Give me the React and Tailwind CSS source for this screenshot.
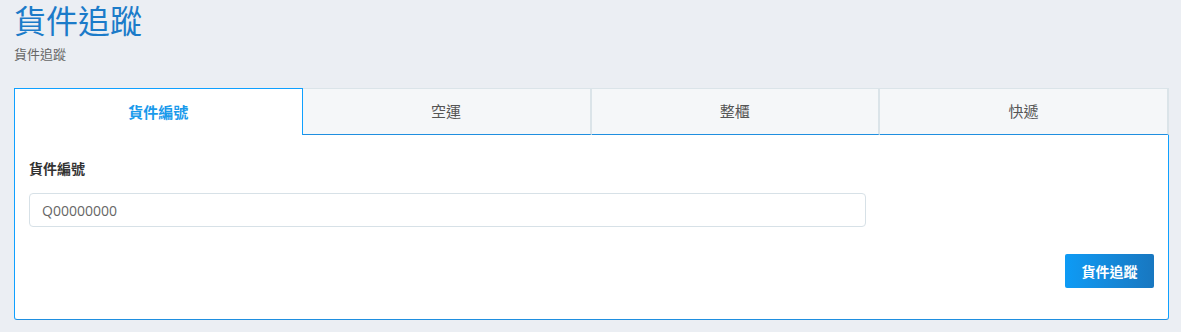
import React, { useState } from 'react';

const tabs = ['貨件編號', '空運', '整櫃', '快遞'];

function App() {
  const [active, setActive] = useState(0);
  const [trackNo, setTrackNo] = useState('Q00000000');

  return (
    <div className="min-h-[332px] bg-[#ebeef3] pl-[14px] pr-[12px] font-['Noto_Sans','Noto_Sans_CJK_TC',sans-serif]">
      <h1 className="pt-[1px] text-[32px] leading-[40px] font-normal text-[#1b7bc9]">貨件追蹤</h1>
      <p className="text-[13px] leading-[18px] text-[#666] mt-[4px]">貨件追蹤</p>

      <div className="mt-[25px]">
        <div className="flex">
          {tabs.map((t, i) => (
            <button
              key={t}
              type="button"
              onClick={() => setActive(i)}
              className={
                i === active
                  ? 'flex-1 h-[47px] bg-white border border-[#0fa0ff] border-b-0 text-[15px] font-bold text-[#1a9aeb]'
                  : 'flex-1 h-[47px] bg-[#f5f7f9] border-t border-r-2 border-[#dbe4e9] border-b border-b-[#1f8fe0] text-[15px] text-[#555]'
              }
            >
              {t}
            </button>
          ))}
        </div>
        <div className="bg-white border border-t-0 border-x-[#0fa0ff] border-b-[#1f8fe0] rounded-b-[3px] px-[14px] pt-[24px] pb-[31px]">
          <label className="block text-[14px] leading-[20px] font-bold text-[#333]">{tabs[active]}</label>
          <input
            type="text"
            value={trackNo}
            onChange={(e) => setTrackNo(e.target.value)}
            style={{ paddingLeft: 12, paddingRight: 12 }}
            className="mt-[14px] block w-[837px] h-[34px] border border-[#d7e1e7] rounded-[4px] text-[14px] text-[#666] font-['Open_Sans',sans-serif] outline-none"
          />
          <div className="flex justify-end mt-[27px]">
            <button
              type="button"
              className="w-[89px] h-[34px] rounded-[2px] bg-gradient-to-r from-[#0d9bf5] to-[#1877c0] text-white text-[14px] font-bold"
            >
              貨件追蹤
            </button>
          </div>
        </div>
      </div>
    </div>
  );
}

export default App;
